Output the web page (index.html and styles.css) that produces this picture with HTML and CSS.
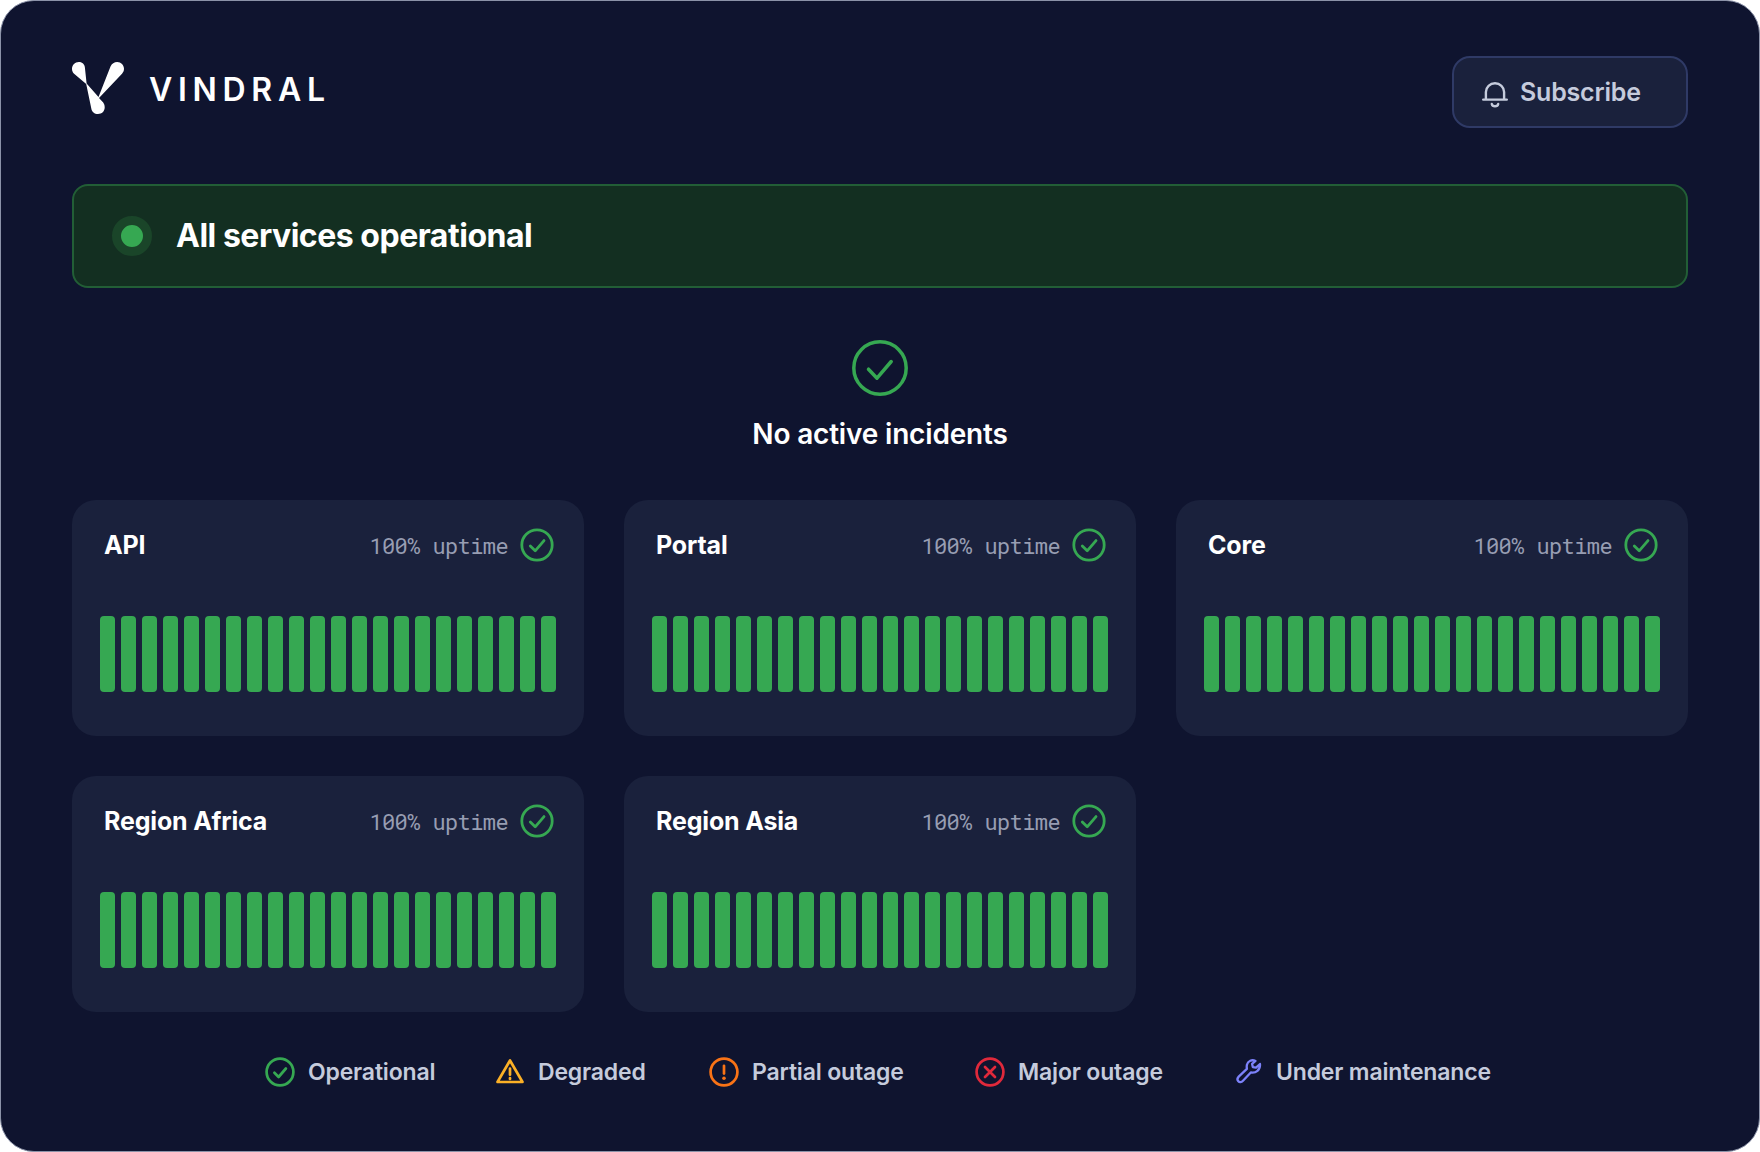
FILE: index.html
```html
<!DOCTYPE html>
<html lang="en">
<head>
    <meta charset="UTF-8">
    <title>Vindral Status</title>
    <link rel="stylesheet" href="styles.css">
</head>
<body>
    <svg class="symbols">
        <symbol id="icon-check" viewBox="0 0 34 34">
            <circle cx="17" cy="17" r="15.2"/>
            <path d="M10.300 17.900l4.900 4.900 8.800-10.200"/>
        </symbol>
    </svg>
    <div class="page">
        <header class="header">
            <div class="brand">
                <svg class="brand-mark" viewBox="0 0 52 52">
                    <path d="M0 7C0 3 3 0 6.800 0C10.500 0 13 2.600 13 6.500L14.600 21.500L26.500 35L38.500 4.500C39.800 1.500 42.300 0 45.200 0C49 0 52 3 52 6.800C52 8.800 51.300 10.300 50 11.800L27 36L31.200 40.500C32.300 42 32.700 43.500 32.700 45.500C32.700 49.200 29.800 52 26 52C22.500 52 19.800 50 19.300 46.500L14.200 22L1.800 11.500C.6 10 0 8.700 0 7Z"/>
                </svg>
                <span class="brand-name">VINDRAL</span>
            </div>
            <button class="subscribe">
                <svg class="bell" viewBox="0 0 26 26">
                    <path d="M1.200 17.600H24.800M3.900 17.400V10a9.100 8.800 0 0 1 18.200 0V17.400M9.800 22c.6 3 5.800 3 6.400 0"/>
                </svg>
                <span>Subscribe</span>
            </button>
        </header>

        <div class="banner">
            <span class="pulse"></span>
            <span class="banner-text">All services operational</span>
        </div>

        <div class="incidents">
            <svg class="incidents-icon" viewBox="0 0 56 56">
                <circle cx="28" cy="28" r="26.200"/>
                <path d="M16.500 29.200l8.500 9 14.200-16.700"/>
            </svg>
            <p class="incidents-text">No active incidents</p>
        </div>

        <div class="services" id="services"></div>

        <div class="legend">
            <div class="legend-item operational">
                <svg viewBox="0 0 30 30"><circle cx="15" cy="15" r="13.400"/><path d="M9.400 15.800l4.200 4.200 7.300-8.500"/></svg>
                <span>Operational</span>
            </div>
            <div class="legend-item degraded">
                <svg viewBox="0 0 30 30"><path d="M15 3.500L2.500 25h25zM15 11.500v6.200M15 21v1"/></svg>
                <span>Degraded</span>
            </div>
            <div class="legend-item partial">
                <svg viewBox="0 0 30 30"><circle cx="15" cy="15" r="13.400"/><path d="M15 8.800v7.800"/><circle class="dot" cx="15" cy="21.300" r="1.800"/></svg>
                <span>Partial outage</span>
            </div>
            <div class="legend-item major">
                <svg viewBox="0 0 30 30"><circle cx="15" cy="15" r="13.400"/><path d="M10 10l10 10M20 10l-10 10"/></svg>
                <span>Major outage</span>
            </div>
            <div class="legend-item maintenance">
                <svg viewBox="0 0 30 30"><path d="M22.500 4C19 2.200 14.800 3.800 13.900 7.800c-.3 1.400-.2 2.600 0 4L5.700 19.600c-1.600 1.700-1.500 3.500-.4 4.700s3.100 1.200 4.700-.5l7.800-8.300c5 1 9.700-2.600 9.200-8.500l-4 3.600-3.200-.5-.7-3.200z"/></svg>
                <span>Under maintenance</span>
            </div>
        </div>
    </div>
    <script>
        const services = ['API', 'Portal', 'Core', 'Region Africa', 'Region Asia'];
        const bars = '<span class="bar"></span>'.repeat(22);

        document.getElementById('services').innerHTML = services.map(name => `
            <div class="card">
                <div class="card-head">
                    <span class="card-name">${name}</span>
                    <span class="uptime">100% uptime</span>
                    <svg class="card-icon"><use href="#icon-check"/></svg>
                </div>
                <div class="bars">${bars}</div>
            </div>`).join('');
    </script>
</body>
</html>
```
FILE: styles.css
```css
* {
    box-sizing: border-box;
}
body {
    margin: 0;
    background-color: #fff;
    font-family: Inter, sans-serif;
    color: #fff;
}
.symbols {
    display: none;
}
svg {
    fill: none;
    stroke: currentColor;
    stroke-linecap: round;
    stroke-linejoin: round;
    flex-shrink: 0;
}
.page {
    width: 1760px;
    height: 1152px;
    padding: 55px 71px 0;
    border: 1px solid #8b92a8;
    border-radius: 34px;
    background-color: #0f142f;
    overflow: hidden;
}
.header {
    display: flex;
    justify-content: space-between;
    height: 72px;
}
.brand {
    display: flex;
    gap: 25px;
    padding-top: 6px;
}
.brand-mark {
    width: 52px;
    height: 52px;
    fill: #fff;
    stroke: none;
}
.brand-name {
    font-size: 32px;
    font-weight: 600;
    line-height: 56px;
    letter-spacing: 5.7px;
}
.subscribe {
    display: flex;
    align-items: center;
    gap: 12px;
    width: 236px;
    height: 72px;
    padding: 0 0 0 28px;
    border: 2px solid #2f3a66;
    border-radius: 18px;
    background-color: #1a213c;
    color: #c5cbdc;
    font-family: inherit;
    font-size: 25px;
    font-weight: 600;
    letter-spacing: -0.2px;
}
.bell {
    width: 26px;
    height: 26px;
    margin-top: 5px;
    stroke-width: 2.4;
}
.banner {
    display: flex;
    align-items: center;
    gap: 24px;
    height: 104px;
    margin-top: 56px;
    padding-left: 38px;
    border: 2px solid #225e36;
    border-radius: 16px;
    background-color: #132f21;
}
.pulse {
    width: 40px;
    height: 40px;
    border: 9px solid #1a4529;
    border-radius: 50%;
    background-color: #36a852;
}
.banner-text {
    margin-top: -1px;
    font-size: 32px;
    font-weight: 700;
    letter-spacing: -0.48px;
}
.incidents {
    display: flex;
    flex-direction: column;
    align-items: center;
    height: 212px;
    padding-top: 52px;
}
.incidents-icon {
    width: 56px;
    height: 56px;
    color: #36a852;
    stroke-width: 3.5;
}
.incidents-text {
    margin: 20px 0 0;
    font-size: 28px;
    font-weight: 600;
    line-height: 36px;
    letter-spacing: -0.18px;
}
.services {
    display: grid;
    grid-template-columns: repeat(3, 512px);
    grid-auto-rows: 236px;
    gap: 40px;
}
.card {
    padding: 28px 28px 0;
    border-radius: 24px;
    background-color: #1a213c;
}
.card-head {
    display: flex;
    align-items: center;
    height: 34px;
    padding: 0 2px 0 4px;
}
.card-name {
    flex: 1;
    font-size: 25px;
    font-weight: 700;
    letter-spacing: -0.17px;
}
.uptime {
    color: #979db2;
    font-family: "Roboto Mono", "JetBrains Mono", "Noto Sans Mono", "DejaVu Sans Mono", monospace;
    font-size: 22px;
    font-weight: 400;
    letter-spacing: -0.6px;
}
.card-icon {
    width: 34px;
    height: 34px;
    margin-left: 12px;
    color: #36a852;
    stroke-width: 2.8;
}
.bars {
    display: flex;
    gap: 6px;
    margin-top: 54px;
}
.bar {
    width: 15px;
    height: 76px;
    border-radius: 4px;
    background-color: #36a852;
}
.legend {
    display: grid;
    grid-template-columns: 230px 214px 266px 258px auto;
    margin-top: 42px;
    padding-left: 193px;
    color: #c5cbdc;
    font-size: 23px;
    font-weight: 600;
    letter-spacing: -0.17px;
}
.legend-item {
    display: flex;
    align-items: center;
    gap: 13px;
    height: 36px;
    white-space: nowrap;
}
.legend svg {
    width: 30px;
    height: 30px;
    stroke-width: 2.7;
}
.operational svg {
    color: #36a852;
}
.degraded svg {
    color: #fbb026;
}
.partial svg {
    color: #f97316;
}
.major svg {
    color: #e0293b;
}
.legend .maintenance svg {
    color: #7c82fa;
    stroke-width: 2.3;
}
.legend .dot {
    fill: currentColor;
    stroke: none;
}
```
